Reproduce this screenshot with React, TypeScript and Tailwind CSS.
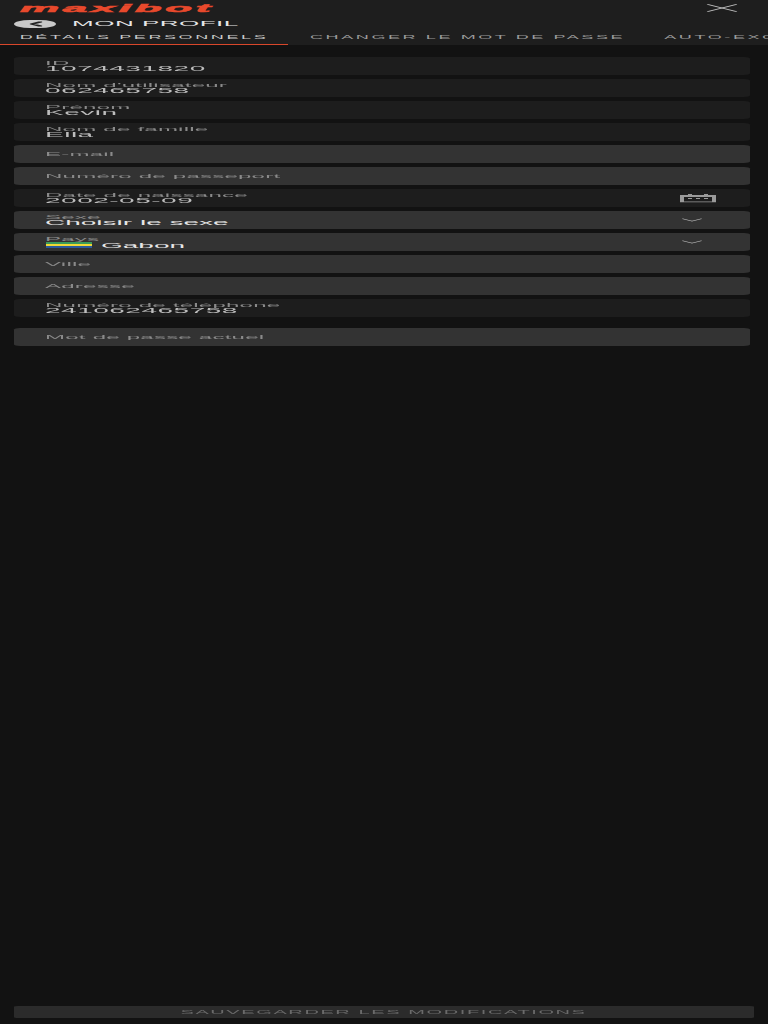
import React from "react";
import { ChevronDown, ChevronLeft, X } from "lucide-react";

type Field = {
  label: string;
  value?: string;
  editable?: boolean;
  kind?: "date" | "select" | "flag";
};

const fields: Field[] = [
  { label: "ID", value: "1074431820" },
  { label: "Nom d'utilisateur", value: "062465758" },
  { label: "Prénom", value: "Kevin" },
  { label: "Nom de famille", value: "Ella" },
  { label: "E-mail", editable: true },
  { label: "Numéro de passeport", editable: true },
  { label: "Date de naissance", value: "2002-05-09", kind: "date" },
  { label: "Sexe", value: "Choisir le sexe", editable: true, kind: "select" },
  { label: "Pays", value: "Gabon", editable: true, kind: "flag" },
  { label: "Ville", editable: true },
  { label: "Adresse", editable: true },
  { label: "Numéro de téléphone", value: "241062465758" },
];

const FieldRow: React.FC<{ field: Field }> = ({ field }) => {
  const bright = field.kind === "select" || field.kind === "flag";

  return (
    <div
      className={`flex h-[36px] items-center justify-between rounded-[3px] pl-[16px] ${
        field.editable ? "bg-[#333333]" : "bg-[#1d1d1d]"
      }`}
    >
      <div className="-ml-[0.5px] flex min-w-0 flex-col">
        {field.value ? (
          <>
            <span className="h-[10px] text-[12px] leading-[10px] tracking-[0.12px] text-[#8a8a8a]">
              {field.label}
            </span>
            {field.kind === "flag" ? (
              <span className="mt-[1px] flex h-[14px] items-center text-[14px] leading-[14px] text-[#e6e6e6]">
                {/* Flag */}
                <span className="mr-[5px] flex w-[23px] flex-col">
                  <span className="h-[4px] bg-[#3a9a5b]" />
                  <span className="h-[4px] bg-[#f0d834]" />
                  <span className="h-[4px] bg-[#2a5a9c]" />
                </span>
                {field.value}
              </span>
            ) : (
              <span
                className={`h-[14px] text-[14px] leading-[14px] ${
                  bright ? "text-[#e6e6e6]" : "tracking-[0.25px] text-[#bdbdbd]"
                }`}
              >
                {field.value}
              </span>
            )}
          </>
        ) : (
          <span className="text-[12px] leading-[14px] tracking-[0.12px] text-[#8a8a8a]">
            {field.label}
          </span>
        )}
      </div>

      {field.kind === "date" && (
        <svg
          viewBox="0 0 18 18"
          className="mr-[17px] h-[18px] w-[18px] text-[#9a9a9a]"
          fill="currentColor"
        >
          <path d="M0 3h4V1h2v2h6V1h2v2h4v15H0zM2 7v9h14V7z" />
          <path d="M4 9h2v2H4zM8 9h2v2H8zM12 9h2v2h-2z" />
        </svg>
      )}
      {bright && (
        <ChevronDown
          size={18}
          strokeWidth={1.4}
          className="mr-[20px] text-[#bdbdbd]"
        />
      )}
    </div>
  );
};

export default function App() {
  return (
    <div className="h-[1024px] w-[768px] overflow-hidden bg-[#121212] font-['Liberation_Sans',sans-serif]">
      {/* The whole screen is drawn at half width and double height, then stretched */}
      <div className="flex h-[2048px] w-[384px] origin-top-left scale-x-[2] scale-y-[0.5] flex-col">
        <header className="h-[90px] shrink-0 bg-[#1e1e1e]">
          <div className="flex h-[32px] items-center justify-between pr-[9px] pl-[10px]">
            <span className="text-[22px] leading-[24px] font-black tracking-[1.8px] text-[#e8492c] italic [-webkit-text-stroke:1px_#e8492c]">
              maxibot
            </span>
            <X size={28} strokeWidth={1} className="text-[#bdbdbd]" />
          </div>

          <div className="flex h-[30px] items-center pt-[2px] pl-[7px]">
            <button className="flex h-[16px] w-[21px] items-center justify-center rounded-full bg-[#c9c9c9] text-[#222222]">
              <ChevronLeft size={16} strokeWidth={3.5} />
            </button>
            <span className="ml-[8px] text-[13px] leading-[16px] tracking-[0.25px] text-[#e6e6e6]">
              MON PROFIL
            </span>
          </div>

          <nav className="flex h-[28px] overflow-hidden text-[9px] tracking-[1.3px] whitespace-nowrap">
            <div className="flex h-full w-[144px] shrink-0 items-center justify-center border-b-2 border-[#d9472b] text-[#c8c8c8]">
              DÉTAILS PERSONNELS
            </div>
            <div className="flex h-full shrink-0 items-center border-b-2 border-transparent pl-[11px] text-[#9a9a9a]">
              CHANGER LE MOT DE PASSE
            </div>
            <div className="flex h-full shrink-0 items-center border-b-2 border-transparent pl-[19.5px] text-[#9a9a9a]">
              AUTO-EXCLUSION
            </div>
          </nav>
        </header>

        <main className="flex flex-1 flex-col pt-[24px] pr-[9.5px] pb-[12px] pl-[7px]">
          <div className="flex flex-col gap-2">
            {fields.map((field) => (
              <FieldRow key={field.label} field={field} />
            ))}
          </div>

          <div className="mt-[22px] flex h-[36px] items-center rounded-[3px] bg-[#333333] pl-[15.5px] text-[12px] tracking-[0.12px] text-[#8a8a8a]">
            Mot de passe actuel
          </div>

          <button className="mt-auto -mr-[2px] h-[24px] rounded-[2px] bg-[#2b2b2b] text-[10px] tracking-[0.8px] text-[#6a6a6a]">
            SAUVEGARDER LES MODIFICATIONS
          </button>
        </main>
      </div>
    </div>
  );
}
